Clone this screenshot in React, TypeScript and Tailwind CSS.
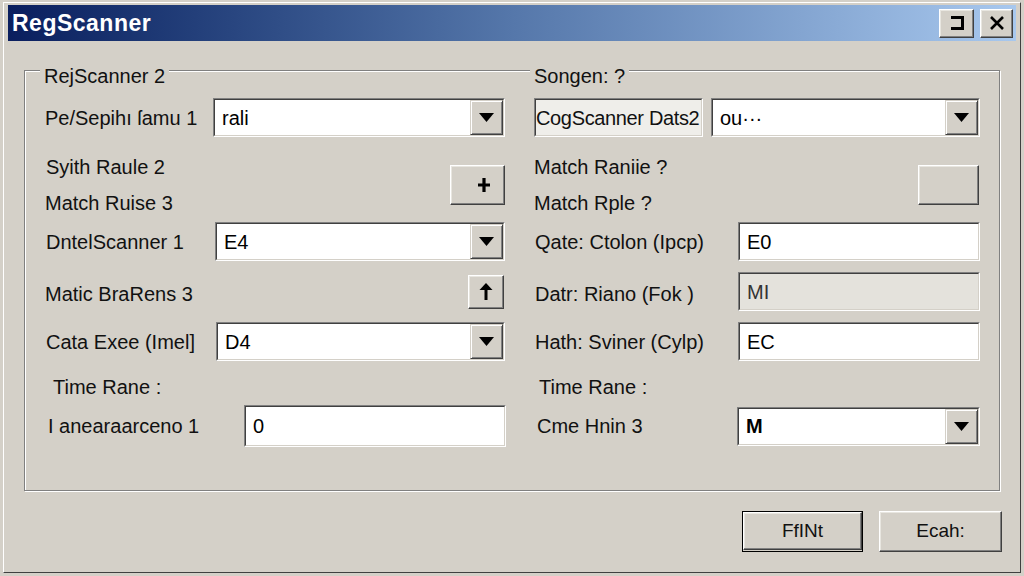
import React from "react";

const font = { fontFamily: '"Liberation Sans", Arial, sans-serif' };

function Sunken({
  w,
  h = "h-[39px]",
  bg = "bg-white",
  children,
}: {
  w: string;
  h?: string;
  bg?: string;
  children: React.ReactNode;
}) {
  return (
    <div className={`${w} ${h} shrink-0 border border-t-[#808080] border-l-[#808080] border-r-white border-b-white`}>
      <div className={`h-full flex items-center overflow-hidden ${bg} border border-t-[#404040] border-l-[#404040] border-r-[#d4d0c8] border-b-[#d4d0c8]`}>
        {children}
      </div>
    </div>
  );
}

function DropButton() {
  return (
    <div className="w-[33px] h-full shrink-0 flex items-center justify-center bg-[#d4d0c8] border border-t-[#d4d0c8] border-l-[#d4d0c8] border-r-[#404040] border-b-[#404040] shadow-[inset_1px_1px_0_#ffffff,inset_-1px_-1px_0_#808080]">
      <svg width="15" height="9" viewBox="0 0 15 9">
        <polygon points="0,0 15,0 7.5,9" fill="#000" />
      </svg>
    </div>
  );
}

function Combo({ w, value, bold }: { w: string; value: string; bold?: boolean }) {
  return (
    <Sunken w={w}>
      <span className={`flex-1 pl-[7px] text-[20px] text-black ${bold ? "font-bold" : ""}`}>{value}</span>
      <DropButton />
    </Sunken>
  );
}

function TextBox({
  w,
  value,
  disabled,
  h = "h-[39px]",
}: {
  w: string;
  value: string;
  disabled?: boolean;
  h?: string;
}) {
  return (
    <Sunken w={w} h={h} bg={disabled ? "bg-[#e4e2dc]" : "bg-white"}>
      <span className={`pl-[7px] text-[20px] ${disabled ? "text-[#333]" : "text-black"}`}>{value}</span>
    </Sunken>
  );
}

function RaisedButton({
  className,
  children,
}: {
  className: string;
  children?: React.ReactNode;
}) {
  return (
    <div
      className={`${className} shrink-0 flex items-center justify-center bg-[#d4d0c8] border border-t-white border-l-white border-r-[#404040] border-b-[#404040] shadow-[inset_-1px_-1px_0_#808080,inset_1px_1px_0_#e8e6e0]`}
    >
      {children}
    </div>
  );
}

function Label({ children, className = "" }: { children: React.ReactNode; className?: string }) {
  return <span className={`text-[20px] text-[#111] whitespace-nowrap ${className}`}>{children}</span>;
}

export default function App() {
  return (
    <div
      className="w-[1024px] h-[576px] bg-[#d4d0c8] pt-[2px] pl-[3px] pr-[3px] pb-[3px] overflow-hidden"
      style={font}
    >
      <div className="h-full flex flex-col border border-t-white border-l-white border-r-[#404040] border-b-[#404040] px-[4px] pt-[2px]">
        {/* title bar */}
        <div className="h-[36px] shrink-0 flex items-center bg-linear-to-r from-[#0a1e5e] via-[#5577aa] to-[#a8c8ee] pl-[4px] pr-[3px]">
          <span className="text-[23px] font-bold text-white tracking-[0.5px]">RegScanner</span>
          <div className="ml-auto flex items-center gap-[6px]">
            <RaisedButton className="w-[35px] h-[29px]">
              <svg width="18" height="16" viewBox="0 0 18 16">
                <path d="M3 2.5 H14.5 V13.5 H3" fill="none" stroke="#000" strokeWidth="3" />
              </svg>
            </RaisedButton>
            <RaisedButton className="w-[33px] h-[29px]">
              <svg width="16" height="16" viewBox="0 0 16 16">
                <path d="M2 2 L14 14 M14 2 L2 14" stroke="#000" strokeWidth="2.6" />
              </svg>
            </RaisedButton>
          </div>
        </div>

        {/* group box */}
        <div className="relative mt-[29px] mx-[16px] h-[421px] shrink-0 border border-[#808080] shadow-[inset_1px_1px_0_#ffffff,1px_1px_0_#ffffff]">
          <span className="absolute left-[15px] top-[-6px] px-[4px] bg-[#d4d0c8] text-[20px] leading-[22px] text-[#111]">
            RejScanner 2
          </span>
          <span className="absolute left-[505px] top-[-6px] px-[4px] bg-[#d4d0c8] text-[20px] leading-[22px] text-[#111]">
            Songen: ?
          </span>

          <div className="grid grid-cols-2 h-full">
            {/* left column */}
            <div className="flex flex-col pl-[20px] pr-[7px] pt-[27px]">
              <div className="h-[39px] flex items-center">
                <Label>Pe/Sepihı ſamu 1</Label>
                <div className="ml-auto">
                  <Combo w="w-[292px]" value="rali" />
                </div>
              </div>
              <div className="h-[85px] pt-[11px] flex items-center">
                <div className="flex flex-col">
                  <Label className="leading-[36px] pl-[1px]">Syith Raule 2</Label>
                  <Label className="leading-[36px]">Match Ruise 3</Label>
                </div>
                <RaisedButton className="ml-auto w-[55px] h-[40px] pl-[12px]">
                  <svg width="14" height="16" viewBox="0 0 14 16">
                    <path d="M7 1 V15 M1 8 H13" stroke="#000" strokeWidth="3.2" />
                  </svg>
                </RaisedButton>
              </div>
              <div className="h-[39px] flex items-center">
                <Label className="pl-[1px]">DntelScanner 1</Label>
                <div className="ml-auto">
                  <Combo w="w-[290px]" value="E4" />
                </div>
              </div>
              <div className="h-[61px] flex items-center">
                <Label className="pt-[4px]">Matic BraRens 3</Label>
                <RaisedButton className="ml-auto mr-[1px] w-[36px] h-[34px]">
                  <svg width="14" height="18" viewBox="0 0 14 18">
                    <path d="M7 4 V17" stroke="#000" strokeWidth="3" />
                    <polygon points="7,0 13.5,7 0.5,7" fill="#000" />
                  </svg>
                </RaisedButton>
              </div>
              <div className="h-[39px] flex items-center">
                <Label className="pl-[1px]">Cata Exee (Imel]</Label>
                <div className="ml-auto">
                  <Combo w="w-[289px]" value="D4" />
                </div>
              </div>
              <div className="h-[44px] pt-[8px] flex items-center">
                <Label className="pl-[8px]">Time Rane :</Label>
              </div>
              <div className="h-[42px] flex items-center">
                <Label className="pl-[3px]">I anearaarceno 1</Label>
                <div className="ml-auto -mr-[1px]">
                  <TextBox w="w-[262px]" h="h-[42px]" value="0" />
                </div>
              </div>
            </div>

            {/* right column */}
            <div className="flex flex-col pl-[22px] pr-[19px] pt-[27px]">
              <div className="h-[39px] flex items-center gap-[8px]">
                <Sunken w="w-[169px]" bg="bg-[#efeeea]">
                  <span className="text-[20px] tracking-[-0.35px] text-[#111] whitespace-nowrap">CogScanner Dats2</span>
                </Sunken>
                <div className="ml-auto">
                  <Combo w="w-[269px]" value="ou···" />
                </div>
              </div>
              <div className="h-[85px] pt-[11px] flex items-center">
                <div className="flex flex-col">
                  <Label className="leading-[36px]">Match Raniie ?</Label>
                  <Label className="leading-[36px]">Match Rple ?</Label>
                </div>
                <RaisedButton className="ml-auto mr-[1px] w-[61px] h-[40px]" />
              </div>
              <div className="h-[39px] flex items-center">
                <Label className="pl-[1px]">Qate: Ctolon (Ipcp)</Label>
                <div className="ml-auto">
                  <TextBox w="w-[242px]" value="E0" />
                </div>
              </div>
              <div className="h-[61px] flex items-center">
                <Label className="pl-[1px] pt-[4px]">Datr: Riano (Fok )</Label>
                <div className="ml-auto">
                  <TextBox w="w-[242px]" value="MI" disabled />
                </div>
              </div>
              <div className="h-[39px] flex items-center">
                <Label className="pl-[1px]">Hath: Sviner (Cylp)</Label>
                <div className="ml-auto">
                  <TextBox w="w-[242px]" value="EC" />
                </div>
              </div>
              <div className="h-[44px] pt-[8px] flex items-center">
                <Label className="pl-[5px]">Time Rane :</Label>
              </div>
              <div className="h-[42px] flex items-center">
                <Label className="pl-[3px]">Cme Hnin 3</Label>
                <div className="ml-auto">
                  <Combo w="w-[243px]" value="M" bold />
                </div>
              </div>
            </div>
          </div>
        </div>

        {/* dialog buttons */}
        <div className="mt-[20px] mr-[14px] flex justify-end gap-[16px]">
          <div className="border border-black">
            <RaisedButton className="w-[119px] h-[38px]">
              <span className="text-[19px] text-[#111]">FfINt</span>
            </RaisedButton>
          </div>
          <RaisedButton className="w-[123px] h-[41px]">
            <span className="text-[19px] text-[#111]">Ecah:</span>
          </RaisedButton>
        </div>
      </div>
    </div>
  );
}
